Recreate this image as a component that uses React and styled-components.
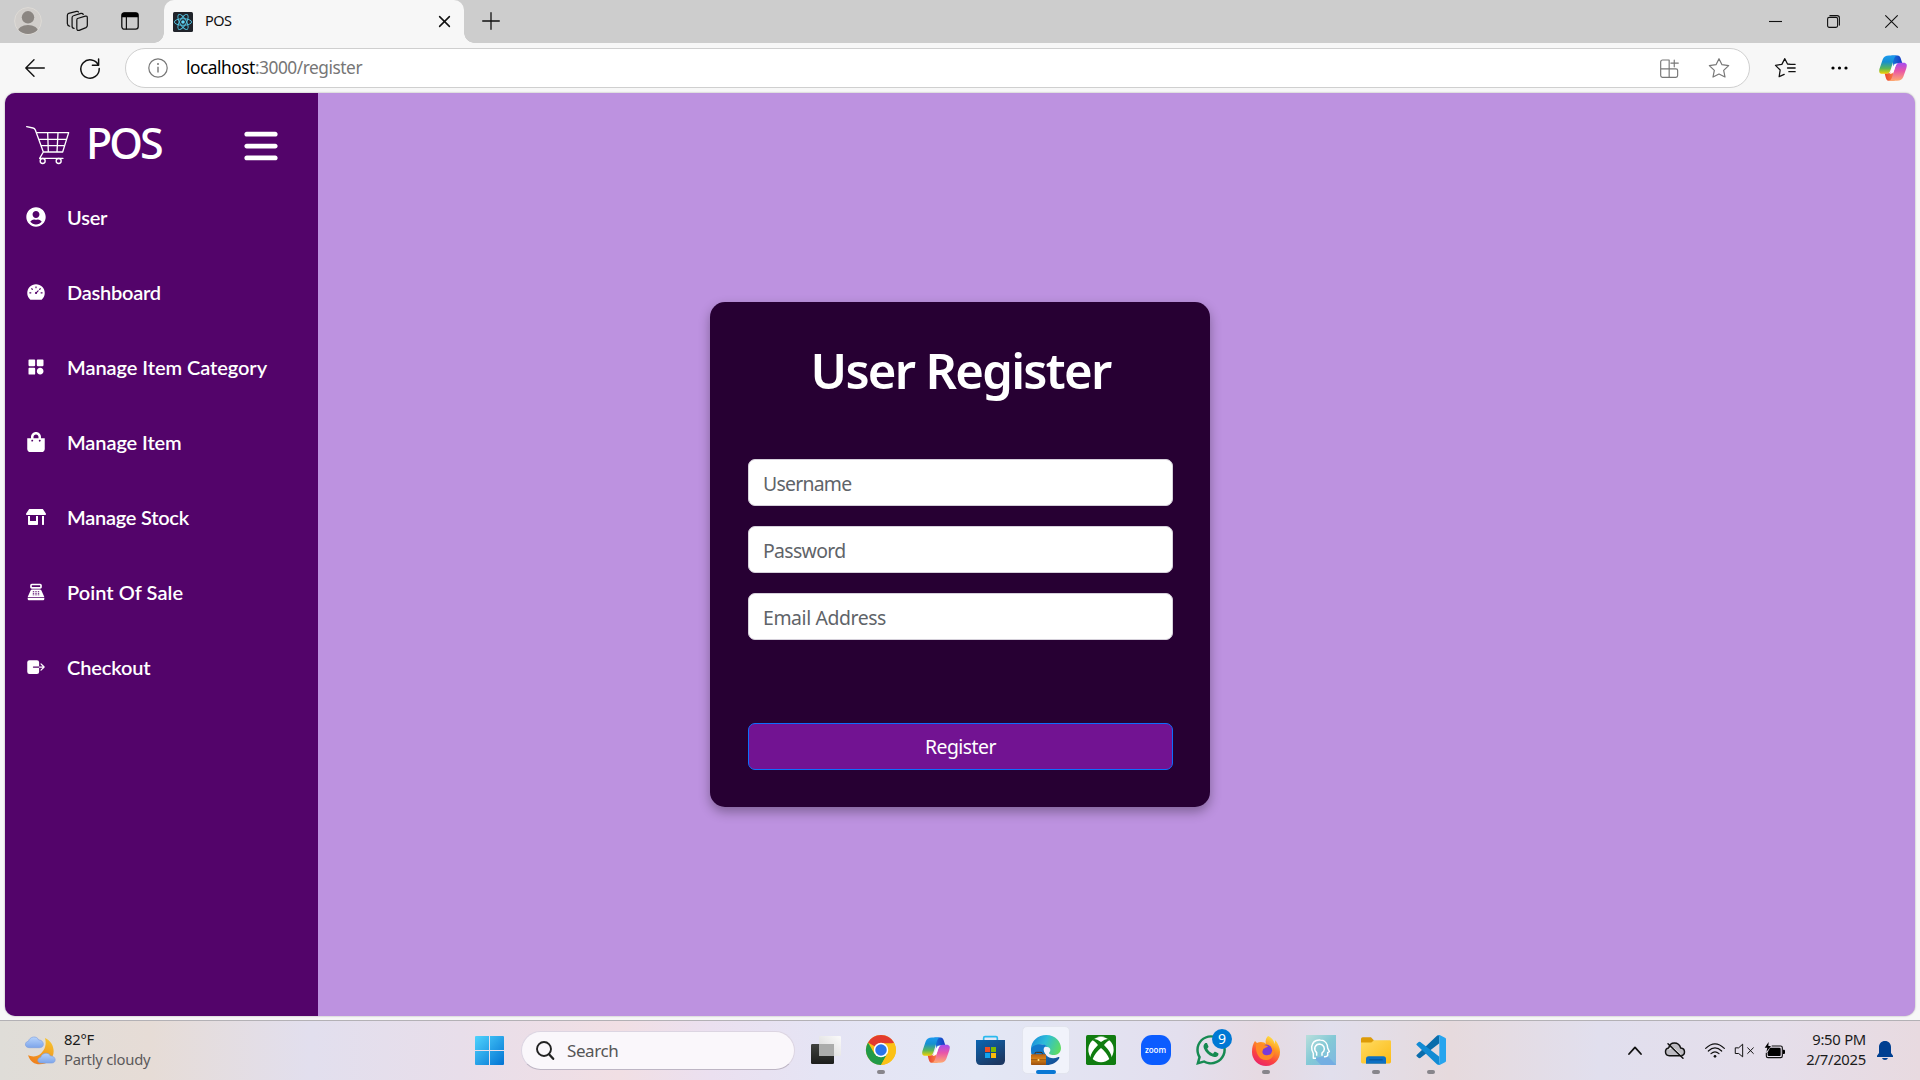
import React from "react";
import styled, { createGlobalStyle } from "styled-components";
import { FaUserCircle, FaShoppingBag, FaStoreAlt } from "react-icons/fa";
import { FaWhatsapp, FaBars } from "react-icons/fa6";
import { AiFillDashboard } from "react-icons/ai";
import { BiSolidCategory } from "react-icons/bi";
import { MdPointOfSale } from "react-icons/md";
import { IoExit } from "react-icons/io5";

const GlobalStyle = createGlobalStyle`
  * { box-sizing: border-box; }
  body { margin: 0; overflow: hidden; font-family: "Noto Sans", sans-serif; }
  svg { display: block; flex: none; overflow: visible; }
`;

const Screen = styled.div`
  width: 1920px;
  height: 1080px;
  display: flex;
  flex-direction: column;
  background: #f7f7f7;
`;

/* ---------- browser chrome ---------- */
const TabStrip = styled.header`
  height: 43px;
  display: flex;
  align-items: center;
  background: #cdcdcd;
`;
const StripTools = styled.div`
  width: 164px;
  height: 42px;
  padding: 0 0 1px 14px;
  display: flex;
  align-items: center;
`;
const Tab = styled.div`
  position: relative;
  width: 300px;
  height: 43px;
  padding: 0 14px 0 9px;
  display: flex;
  align-items: center;
  background: #f7f7f7;
  border-radius: 10px 10px 0 0;
  &::before, &::after {
    content: "";
    position: absolute;
    bottom: 0;
    width: 10px;
    height: 10px;
  }
  &::before {
    left: -10px;
    background: radial-gradient(circle at 0 0, transparent 9.5px, #f7f7f7 10px);
  }
  &::after {
    right: -10px;
    background: radial-gradient(circle at 100% 0, transparent 9.5px, #f7f7f7 10px);
  }
`;
const TabTitle = styled.span`
  flex: 1;
  margin: -3px 0 0 12px;
  font-size: 14.5px;
  letter-spacing: -0.5px;
  color: #111;
`;
const NewTab = styled.div`
  margin: 0 0 1px 18px;
`;
const WindowControls = styled.div`
  margin-left: auto;
  padding-right: 22px;
  display: flex;
  align-items: center;
  gap: 44px;
`;
const Toolbar = styled.div`
  height: 50px;
  padding: 0 13px 0 25px;
  display: flex;
  align-items: center;
`;
const Gap = styled.span`
  flex: none;
  width: ${(p) => p.$w}px;
`;
const AddressBar = styled.div`
  width: 1625px;
  height: 40px;
  margin-left: 25px;
  padding: 0 20px 0 22px;
  display: flex;
  align-items: center;
  background: #fff;
  border: 1px solid #cfcfcf;
  border-radius: 20px;
`;
const Url = styled.span`
  flex: 1;
  margin: -2px 0 0 18px;
  font-size: 17.3px;
  letter-spacing: -0.46px;
  color: #767676;
`;
const Host = styled.span`
  color: #000;
`;

/* ---------- application ---------- */
const Viewport = styled.div`
  height: 928px;
  padding: 0 5px 4px;
  border-bottom: 1px solid #b3b1b5;
`;
const AppFrame = styled.div`
  height: 923px;
  display: flex;
  overflow: hidden;
  border-radius: 10px;
  background: #bd92e0;
  box-shadow: 0 0 2px rgba(0, 0, 0, 0.35);
`;
const Sidebar = styled.nav`
  width: 313px;
  background: #53046a;
  color: #fff;
`;
const SidebarHeader = styled.div`
  height: 86px;
  padding: 18px 40px 0 21px;
  display: flex;
  align-items: center;
`;
const Brand = styled.span`
  flex: 1;
  margin: -5px 0 0 16.5px;
  font-size: 43px;
  font-weight: 500;
  letter-spacing: -3px;
  line-height: 1;
`;
const Burger = styled(FaBars)`
  margin: 1px -2px 0 0;
`;
const MenuItem = styled.a`
  height: 75px;
  padding-left: 21px;
  display: flex;
  align-items: center;
  gap: 21px;
  font-family: Lato, sans-serif;
  font-size: 20px;
  font-weight: 600;
  letter-spacing: ${(p) => p.$track || 0}px;
`;
const IconSlot = styled.span`
  width: 20px;
  display: flex;
  justify-content: center;
`;
const Main = styled.main`
  flex: 1;
  padding-right: 313px;
  display: flex;
  align-items: center;
  justify-content: center;
`;
const Card = styled.form`
  width: 500px;
  height: 505px;
  padding: 38px 37px 37px 38px;
  display: flex;
  flex-direction: column;
  background: #270033;
  border-radius: 15px;
  box-shadow: 0 5px 12px rgba(0, 0, 0, 0.32);
`;
const Title = styled.h1`
  margin: 0 0 59px;
  font-size: 49px;
  font-weight: 600;
  letter-spacing: -1.7px;
  line-height: 60px;
  text-align: center;
  color: #fff;
`;
const Fields = styled.div`
  display: grid;
  gap: 20px;
`;
const Field = styled.input`
  height: 47px;
  padding: 2px 14px 0;
  border: 1px solid #d5d0da;
  border-radius: 7px;
  background: #fff;
  font: 19.4px "Noto Sans", sans-serif;
  letter-spacing: ${(p) => p.$track}px;
  outline: none;
  &::placeholder { color: #5f6469; opacity: 1; }
`;
const Submit = styled.button`
  height: 47px;
  margin-top: auto;
  border: 1px solid #0d6efd;
  border-radius: 7px;
  background: #721392;
  color: #fff;
  font: 19.4px "Noto Sans", sans-serif;
  letter-spacing: -0.5px;
`;

/* ---------- taskbar ---------- */
const Taskbar = styled.footer`
  height: 59px;
  display: flex;
  align-items: center;
  background: linear-gradient(90deg, #dfddd8 0, #e6dcd6 150px, #e2dfee 310px, #e8deea 460px, #f1dfe4 620px, #ebe0f0 710px, #e5e4f4 820px, #e3e7f5 980px, #e3dfee 1180px, #e6dae2 1260px, #e1dfed 1330px, #e6dadd 1450px, #e1dfee 1600px, #e5deea 1780px, #e8dae0 1920px);
`;
const Weather = styled.div`
  width: 462px;
  padding-left: 25px;
  display: flex;
  align-items: center;
  gap: 8px;
`;
const Stack = styled.div`
  display: flex;
  flex-direction: column;
  align-items: ${(p) => p.$align || "flex-start"};
  margin-top: -4px;
  font-size: 14.8px;
  letter-spacing: -0.25px;
  line-height: 20px;
  color: #1b1b1b;
`;
const Muted = styled.span`
  color: #5c5a5b;
`;
const TaskItem = styled.div`
  position: relative;
  flex: none;
  width: 55px;
  height: 59px;
  padding-bottom: 1px;
  display: flex;
  align-items: center;
  justify-content: center;
`;
const ActiveTile = styled.div`
  width: 48px;
  height: 48px;
  display: flex;
  align-items: center;
  justify-content: center;
  background: #f1f3fb;
  border: 1px solid #e2e4ee;
  border-radius: 5px;
`;
const Indicator = styled.span`
  position: absolute;
  bottom: 6px;
  left: 50%;
  width: ${(p) => (p.$active ? 20 : 8)}px;
  height: 4px;
  transform: translateX(-50%);
  border-radius: 2px;
  background: ${(p) => (p.$active ? "#0a78d4" : "#87858b")};
`;
const Badge = styled.span`
  position: absolute;
  top: 8px;
  left: 29px;
  width: 20px;
  height: 20px;
  border-radius: 50%;
  background: #0078d4;
  color: #fff;
  font-size: 14px;
  line-height: 20px;
  text-align: center;
`;
const SearchBox = styled.div`
  flex: none;
  width: 274px;
  height: 39px;
  margin: 0 3px 1px 4px;
  padding-left: 14px;
  display: flex;
  align-items: center;
  gap: 13px;
  background: #faf7fb;
  border: 1px solid #dcd5e2;
  border-bottom-color: #bdb5c4;
  border-radius: 20px;
  font-size: 17px;
  letter-spacing: -0.4px;
  color: #555;
`;
const Tray = styled.div`
  margin-left: auto;
  padding-right: 27px;
  display: flex;
  align-items: center;
`;
const WhatsappMark = styled(FaWhatsapp)`
  color: #168a52;
`;

/* ---------- icons ---------- */
const line = { fill: "none", stroke: "#111", strokeLinecap: "round", strokeLinejoin: "round" };

const Avatar = () => (
  <svg width="28" height="28" viewBox="0 0 28 28">
    <clipPath id="av"><circle cx="14" cy="14" r="13" /></clipPath>
    <circle cx="14" cy="14" r="13.4" fill="#d1cecb" stroke="#dedbd6" />
    <circle cx="14" cy="10.3" r="6.2" fill="#8b8682" />
    <ellipse cx="14" cy="25" rx="10.5" ry="7" fill="#8b8682" clipPath="url(#av)" />
  </svg>
);
const Workspaces = () => (
  <svg width="21" height="20" viewBox="202 35 62 59" {...line} strokeWidth="3.6">
    <path d="M233 57l23-7q6-1 6 5v23q0 4-4 6l-20 8q-7 2-7-5V62q0-4 2-5z" />
    <path d="M223 86q-6 0-6-6V55q0-5 4-6l22-7q5-1 7 3M210 80q-7-2-7-8V48q0-5 4-6l23-6q4-1 6 2" />
  </svg>
);
const TabActions = () => (
  <svg width="18" height="18" viewBox="0 0 18 18">
    <rect x="0.8" y="0.8" width="16.4" height="16.4" rx="2.6" {...line} strokeWidth="1.3" />
    <path d="M.8 5.2V3Q.8.6 3.4.6h11.2q2.6 0 2.6 2.4v2.2z" fill="#000" />
    <path d="M5.4 5v12" {...line} strokeWidth="1.2" />
  </svg>
);
const ReactFavicon = () => (
  <svg width="20" height="20" viewBox="0 0 20 20">
    <rect width="20" height="20" rx="1.5" fill="#20232a" />
    <g fill="none" stroke="#53c1de" strokeWidth="0.95">
      <ellipse cx="10" cy="10" rx="8.6" ry="3.3" />
      <ellipse cx="10" cy="10" rx="8.6" ry="3.3" transform="rotate(60 10 10)" />
      <ellipse cx="10" cy="10" rx="8.6" ry="3.3" transform="rotate(120 10 10)" />
    </g>
    <circle cx="10" cy="10" r="1.8" fill="#61dafb" />
  </svg>
);
const Cross = ({ size, weight }) => (
  <svg width={size} height={size} viewBox={`0 0 ${size} ${size}`} {...line} strokeWidth={weight}>
    <path d={`M.6.6L${size - 0.6} ${size - 0.6}M${size - 0.6}.6L.6 ${size - 0.6}`} />
  </svg>
);
const Plus = () => (
  <svg width="18" height="18" viewBox="0 0 18 18" {...line} strokeWidth="1.3"><path d="M9 .7v16.6M.7 9h16.6" /></svg>
);
const Minimize = () => (
  <svg width="14" height="14" viewBox="0 0 14 14" {...line} strokeWidth="1.1" strokeLinecap="butt"><path d="M0 6.5h13" /></svg>
);
const Restore = () => (
  <svg width="14" height="13" viewBox="0 0 14 13" {...line} strokeWidth="1.1">
    <rect x=".6" y="2.4" width="10" height="10" rx="1.6" />
    <path d="M2.9.6h7.2q2.3 0 2.3 2.3v7.2" />
  </svg>
);
const Back = () => (
  <svg width="20" height="18" viewBox="0 0 20 18" {...line} strokeWidth="1.4"><path d="M19.3 9H1M9 .8L.8 9 9 17.2" /></svg>
);
const Reload = () => (
  <svg width="20" height="21" viewBox="0 0 20 21" {...line} strokeWidth="1.5">
    <path d="M18.4 7.2A9.2 9.2 0 1 0 19.2 10.6M18.6.9v6.3h-6.2" />
  </svg>
);
const Info = () => (
  <svg width="20" height="20" viewBox="0 0 20 20">
    <circle cx="10" cy="10" r="9.2" fill="none" stroke="#777" strokeWidth="1.2" />
    <path d="M10 8.8v5.6" stroke="#777" strokeWidth="1.4" />
    <circle cx="10" cy="5.9" r="1" fill="#777" />
  </svg>
);
const AppInstall = () => (
  <svg width="19" height="19" viewBox="180 176 56 56" {...line} stroke="#777" strokeWidth="3.4">
    <path d="M207 179h-19q-6 0-6 6v40q0 5 5 5h40q5 0 5-5v-15q0-5-5-5h-45M207 179v51M222 179v20M212 188h22" />
  </svg>
);
const Star = () => (
  <svg width="20" height="20" viewBox="327 176 60 60" {...line} stroke="#777" strokeWidth="3.6">
    <path d="M357 178l9 18 20 3-15 14 4 20-18-9-18 9 4-20-15-14 20-3z" />
  </svg>
);
const Favorites = () => (
  <svg width="21" height="20" viewBox="525 176 62 60" {...line} strokeWidth="3.8">
    <path d="M572 195l-10-1-8-16-9 17-19 3 14 14-3 20 15-7M566 195h19M562 206h23M566 217h19" />
  </svg>
);
const Dots = () => (
  <svg width="17" height="4" viewBox="0 0 17 4"><circle cx="2" cy="2" r="1.6" /><circle cx="8.5" cy="2" r="1.6" /><circle cx="15" cy="2" r="1.6" /></svg>
);
const Copilot = () => (
  <svg width="28" height="26" viewBox="837 165 84 77">
    <defs>
      <linearGradient id="cpA" x1="0" y1="0" x2="0" y2="1"><stop offset="0" stopColor="#1a9af0" /><stop offset=".35" stopColor="#168fd0" /><stop offset=".7" stopColor="#59b65a" /><stop offset="1" stopColor="#f5d000" /></linearGradient>
      <linearGradient id="cpB" x1="0" y1="0" x2="0" y2="1"><stop offset="0" stopColor="#a44df0" /><stop offset=".45" stopColor="#e955a8" /><stop offset="1" stopColor="#ffab70" /></linearGradient>
      <linearGradient id="cpC"><stop offset="0" stopColor="#1579d8" /><stop offset="1" stopColor="#1737c4" /></linearGradient>
      <linearGradient id="cpD"><stop offset="0" stopColor="#e8442f" /><stop offset="1" stopColor="#fb8345" /></linearGradient>
    </defs>
    <path d="M874 166h19c9 0 10 12 14 23h-13c-7 0-10 4-13 10z" fill="url(#cpC)" />
    <path d="M884 242h-17c-9 0-10-12-13-23h11c7 0 11-4 13-10z" fill="url(#cpD)" />
    <path d="M867 166h24c-7 2-9 10-12 20l-7 22c-3 9-6 13-14 13h-10c-11 0-12-8-9-17l9-26c3-8 9-12 19-12z" fill="url(#cpA)" />
    <path d="M891 242h-24c7-2 9-10 12-20l7-22c3-9 6-12 14-12h10c11 0 12 7 9 16l-9 26c-3 8-9 12-19 12z" fill="url(#cpB)" />
    <path d="M884 191l7 0q-4 4-6 11l-4 12q-3 7-8 7h-5q4-3 6-10z" fill="#fff" />
  </svg>
);
const Cart = () => (
  <svg width="43.5" height="38.5" viewBox="77 108 130.5 115.5" {...line} stroke="#fff" strokeWidth="4">
    <path d="M79 110l19 4q5 1 7 6l24 66-11 19h70M109 128h96l-18 58h-58M116 148h83M122 167h70M142 128l2 58M173 128l-3 58" />
    <circle cx="127" cy="213" r="7.5" /><circle cx="175" cy="213" r="7.5" />
  </svg>
);

const WeatherIcon = () => (
  <svg width="31" height="29" viewBox="74 100 93 87">
    <defs>
      <linearGradient id="moon" x1=".8" y1="0" x2=".3" y2="1"><stop offset="0" stopColor="#f6c52e" /><stop offset="1" stopColor="#ef7f1c" /></linearGradient>
      <linearGradient id="cloud" x1="0" y1="0" x2="0" y2="1"><stop offset="0" stopColor="#b7d3fb" /><stop offset="1" stopColor="#7da5ea" /></linearGradient>
    </defs>
    <path d="M134 106c16 8 26 22 26 39 0 25-19 40-42 40-15 0-28-7-35-27 12 5 27 5 38-5 14-12 18-29 13-47z" fill="url(#moon)" />
    <path d="M86 135c-14 0-14-18-2-19 4-15 26-18 31-4 16-1 20 23 3 23z" fill="url(#cloud)" stroke="#7ea0df" strokeWidth="2" />
    <path d="M122 181c-13 0-12-15-1-17 4-14 24-17 29-4 17-1 20 21 4 21z" fill="url(#cloud)" stroke="#7ea0df" strokeWidth="2" />
  </svg>
);
const WindowsLogo = () => (
  <svg width="29" height="29" viewBox="0 0 29 29">
    <defs><linearGradient id="win" x1="0" y1="0" x2="1" y2="1"><stop offset="0" stopColor="#4fd3fd" /><stop offset="1" stopColor="#0273d3" /></linearGradient></defs>
    <path d="M1 0h13v14H0V1Q0 0 1 0zM15 0h13q1 0 1 1v13H15zM0 15h14v14H1q-1 0-1-1zM15 15h14v13q0 1-1 1H15z" fill="url(#win)" />
  </svg>
);
const SearchIcon = () => (
  <svg width="18" height="19" viewBox="0 0 18 19" {...line} stroke="#222" strokeWidth="1.9"><circle cx="8" cy="8" r="7" /><path d="M13 13.2l4.2 4.6" strokeWidth="2.3" /></svg>
);
const TaskView = () => (
  <svg width="30" height="28" viewBox="0 0 30 28">
    <defs>
      <linearGradient id="tv" x1="0" y1="0" x2="0" y2="1"><stop offset="0" stopColor="#40423f" /><stop offset="1" stopColor="#1c1d1b" /></linearGradient>
      <linearGradient id="tw" x1="1" y1="0" x2="0" y2="1"><stop offset="0" stopColor="#fbfbfb" /><stop offset="1" stopColor="#d6d6d6" /></linearGradient>
    </defs>
    <rect y="8" width="23" height="20" rx="1.3" fill="url(#tv)" />
    <rect x="8" y="0" width="22" height="20" rx="1.3" fill="url(#tw)" />
    <path d="M8 8h15v12H9q-1 0-1-1z" fill="#abacab" />
  </svg>
);
const Chrome = () => (
  <svg width="30" height="30" viewBox="0 0 48 48">
    <circle cx="24" cy="24" r="24" fill="#fbc116" />
    <path d="M24 24L3.2 12A24 24 0 0 1 44.8 12z" fill="#e33b2e" />
    <path d="M3.2 12A24 24 0 0 0 24 48l10.4-18L24 24 13.6 30z" fill="#219a48" />
    <path d="M24 13h21.2A24 24 0 0 1 24 48l10-18z" fill="#fbc116" />
    <circle cx="24" cy="24" r="11.6" fill="#fff" /><circle cx="24" cy="24" r="9.2" fill="#2a75ea" />
  </svg>
);
const Store = () => (
  <svg width="29" height="29" viewBox="48 78 87 87">
    <defs><linearGradient id="st" x1="0" y1="0" x2=".6" y2="1"><stop offset="0" stopColor="#0c66b2" /><stop offset="1" stopColor="#1c3863" /></linearGradient></defs>
    <path d="M71 94V84q0-4 4-4h33q4 0 4 4v10" fill="none" stroke="#2bb9ee" strokeWidth="5" />
    <path d="M48 90h87v61q0 14-14 14H62q-14 0-14-14z" fill="url(#st)" />
    <path fill="#f04f23" d="M75 111h15v15H75z" /><path fill="#7fba00" d="M93 111h15v15H93z" /><path fill="#12a4ee" d="M75 129h15v15H75z" /><path fill="#fdb90b" d="M93 129h15v15H93z" />
  </svg>
);
const Edge = () => (
  <svg width="30" height="30" viewBox="213 75 90 90">
    <defs>
      <linearGradient id="eg" x1="0" y1=".3" x2="1" y2=".6"><stop offset="0" stopColor="#1b8fdc" /><stop offset=".45" stopColor="#2dbdd8" /><stop offset="1" stopColor="#5edc62" /></linearGradient>
      <linearGradient id="ed" x1="0" y1="0" x2="1" y2="1"><stop offset="0" stopColor="#1390dc" /><stop offset="1" stopColor="#15478c" /></linearGradient>
      <linearGradient id="bc" x1="0" y1="0" x2="0" y2="1"><stop offset="0" stopColor="#b96012" /><stop offset=".45" stopColor="#d9841a" /><stop offset="1" stopColor="#9b4f0d" /></linearGradient>
    </defs>
    <path d="M213 118c2 27 20 46 46 47 18 0 31-8 38-19 3-4 0-6-4-4-11 5-26 4-35-7-5-6-8-13-7-20-13-19-36-11-38 3z" fill="url(#ed)" />
    <path d="M213 118c0-26 21-43 46-43 28 0 44 21 44 39 0 17-14 22-26 21-8-1-12-4-8-9 5-7 1-16-12-16 2-2-7-8-18-6-13 1-22 7-26 14z" fill="url(#eg)" />
    <path d="M213 118c3-17 40-20 48-9-10 1-15 11-12 23h-35z" fill="#1379cc" />
    <path d="M225 134v-3q0-4 4-4h14q4 0 4 4v3" fill="none" stroke="#4b2a0b" strokeWidth="3" />
    <rect x="213" y="133" width="45" height="32" rx="2" fill="url(#bc)" /><path d="M213 149h45" stroke="#80430d" strokeWidth="2" /><rect x="233" y="147" width="5" height="6" fill="#ffd879" />
  </svg>
);
const Xbox = () => (
  <svg width="30" height="30" viewBox="378 75 90 90">
    <rect x="378" y="75" width="90" height="90" rx="5" fill="#107c10" />
    <circle cx="423" cy="119" r="38" fill="#fff" />
    <path d="M399 88q9-3 24 8 15-11 24-8l4 2q-8 2-19 15 22 22 23 38l-6 6q-9-22-26-35-17 13-26 35l-6-6q1-16 23-38-11-13-19-15z" fill="#107c10" />
    <path d="M406 83q8-3 17 3 9-6 17-3-17-7-34 0z" fill="#fff" />
  </svg>
);
const ZoomTile = styled.div`
  width: 30px;
  height: 30px;
  display: flex;
  align-items: center;
  justify-content: center;
  border-radius: 11px;
  background: #0b5cff;
  color: #fff;
  font: 600 8px/1 "Open Sans", sans-serif;
  padding-bottom: 1px;
`;
const Firefox = () => (
  <svg width="30" height="30" viewBox="0 0 30 30">
    <defs>
      <linearGradient id="fx" x1=".8" y1="0" x2=".3" y2="1"><stop offset="0" stopColor="#fff04c" /><stop offset=".35" stopColor="#ff9a22" /><stop offset=".7" stopColor="#fb4540" /><stop offset="1" stopColor="#e9236b" /></linearGradient>
    </defs>
    <path d="M17 1c5 2 6 6 7 8 0-2 0-3 0-4 3 3 5 8 5 12a14 14 0 0 1-28 0C1 12 2 9 4 6l2 2c3-2 8-1 9 1-1-3 0-6 2-8z" fill="url(#fx)" />
    <circle cx="15.3" cy="15.3" r="5.8" fill="#7a3bd8" />
    <path d="M5 9c4-2 7 0 8 1l4 1c-1 2-5 2-5 4-2 3 1 6 5 5 4 0 6-4 5-8 3 6 0 12-6 13-7 1-12-6-11-16z" fill="#ff8a25" />
  </svg>
);
const HeadApp = () => (
  <svg width="30" height="30" viewBox="1038 75 90 90">
    <defs><linearGradient id="hd" x1="0" y1="0" x2="1" y2="1"><stop offset="0" stopColor="#b9dfdc" /><stop offset=".5" stopColor="#83c9d6" /><stop offset="1" stopColor="#7fb7e2" /></linearGradient></defs>
    <path d="M1038 75h90v90h-90z" fill="url(#hd)" /><path d="M1062 144l40-6 26 26v1h-45z" fill="#6ea7e4" opacity=".7" />
    <g fill="none" stroke="#fff" strokeWidth="4.5" strokeLinejoin="round"><path d="M1068 145h-8v-15q-6-9-5-20c3-17 15-21 26-20 15 1 22 12 22 24l5 11-5 3v8q-2 5-11 4" /><path d="M1070 137v-9q-8-7-5-17 4-9 14-9c12 1 17 13 12 22l-5 5v8" /></g>
  </svg>
);
const Explorer = () => (
  <svg width="30" height="27" viewBox="1203 81 90 80">
    <defs><linearGradient id="ex" x1="0" y1="0" x2="1" y2="1"><stop offset="0" stopColor="#ffdb62" /><stop offset="1" stopColor="#fcbb16" /></linearGradient></defs>
    <path d="M1203 86q0-5 5-5h25l9 10v20h-39z" fill="#dd9b08" /><path d="M1203 97h31l8-7h47q4 0 4 4v61q0 5-5 5h-80q-5 0-5-5z" fill="url(#ex)" />
    <path d="M1218 161v-15q0-8 8-8h44q8 0 8 8v15z" fill="#0d70c4" /><path d="M1228 149h40" stroke="#084f91" strokeWidth="3" />
  </svg>
);
const VsCode = () => (
  <svg width="30" height="30" viewBox="1368 75 90 90">
    <path d="M1370 139l6 5q2 1 5 0l57-44V75q-5 0-8 3l-60 57q-2 2 0 4z" fill="#0a6cab" />
    <path d="M1370 101l6-5q2-1 5 0l57 44v25q-5 0-8-3l-60-57q-2-2 0-4z" fill="#128bd4" />
    <path d="M1433 77q2-3 6-2l16 8q3 1 3 5v64q0 4-3 5l-16 8q-4 1-7-2 6 1 6-6V83q0-7-5-6z" fill="#27a5ee" />
  </svg>
);
const Chevron = () => (
  <svg width="14" height="9" viewBox="0 0 14 9" {...line} strokeWidth="1.8"><path d="M1 8l6-6.6L13 8" /></svg>
);
const CloudOff = () => (
  <svg width="20" height="17" viewBox="192 125 60 51" {...line} strokeWidth="4.4">
    <path d="M205 166h33c17 0 16-22 1-23-6-20-32-20-36 0-13 2-13 23 2 23z" fill="#bdbbc2" /><path d="M204 146q9-8 18 0l18 17" stroke="#f5f5f5" strokeWidth="3" /><path d="M201 130l45 44" />
  </svg>
);
const Wifi = () => (
  <svg width="20" height="15" viewBox="312 126 60 45" {...line} strokeWidth="3.6">
    <path d="M314 142q28-27 56 0M322 150q20-19 40 0M330 158q12-11 24 0" /><circle cx="342" cy="166" r="4" fill="#111" stroke="none" />
  </svg>
);
const VolumeOff = () => (
  <svg width="19" height="15" viewBox="402 128 57 44" {...line} strokeWidth="3">
    <path d="M404 142h9l12-11v38l-12-10h-9zM440 142l17 17M457 142l-17 17" />
  </svg>
);
const Battery = () => (
  <svg width="20" height="17" viewBox="492 120 60 51">
    <path d="M512 132h27q5 0 5 5v25q0 5-5 5h-38q-5 0-5-5v-10" fill="none" stroke="#111" strokeWidth="3.4" /><path d="M507 137h28q4 0 4 4v18q0 3-3 3h-33q-3 0-3-3v-8z" /><path d="M546 143h3q3 0 3 3v7q0 3-3 3h-3z" /><path d="M503 120l-12 17h8l-3 13 14-18h-8z" />
  </svg>
);
const Bell = () => (
  <svg width="16" height="19" viewBox="831 123 48 57" fill="#003f91">
    <path d="M855 123c11 0 18 8 18 18v18l6 8v4h-48v-4l6-8v-18c0-10 7-18 18-18z" /><path d="M846 174h18q-2 6-9 6t-9-6z" />
  </svg>
);

const MENU = [
  { label: "User", Icon: FaUserCircle, track: -0.2 },
  { label: "Dashboard", Icon: AiFillDashboard, track: -0.25 },
  { label: "Manage Item Category", Icon: BiSolidCategory, track: -0.06 },
  { label: "Manage Item", Icon: FaShoppingBag, track: -0.1 },
  { label: "Manage Stock", Icon: FaStoreAlt, track: -0.25 },
  { label: "Point Of Sale", Icon: MdPointOfSale, track: 0.05 },
  { label: "Checkout", Icon: IoExit, track: -0.15 },
];
const FIELDS = [
  { label: "Username", track: -0.75 },
  { label: "Password", track: -0.65 },
  { label: "Email Address", track: -0.4 },
];
const APPS = [
  { Icon: TaskView },
  { Icon: Chrome, running: true },
  { Icon: Copilot },
  { Icon: Store },
  { Icon: Edge, active: true },
  { Icon: Xbox },
  { Icon: () => <ZoomTile>zoom</ZoomTile> },
  { Icon: () => <WhatsappMark size={34} />, badge: "9" },
  { Icon: Firefox, running: true },
  { Icon: HeadApp },
  { Icon: Explorer, running: true },
  { Icon: VsCode, running: true },
];

export default function App() {
  return (
    <Screen>
      <GlobalStyle />
      <TabStrip>
        <StripTools>
          <Avatar /><Gap $w={25} /><Workspaces /><Gap $w={33} /><TabActions />
        </StripTools>
        <Tab>
          <ReactFavicon />
          <TabTitle>POS</TabTitle>
          <Cross size={11} weight={1.5} />
        </Tab>
        <NewTab><Plus /></NewTab>
        <WindowControls><Minimize /><Restore /><Cross size={13} weight={1.1} /></WindowControls>
      </TabStrip>
      <Toolbar>
        <Back /><Gap $w={35} /><Reload />
        <AddressBar>
          <Info />
          <Url><Host>localhost</Host>:3000/register</Url>
          <AppInstall /><Gap $w={30} /><Star />
        </AddressBar>
        <Gap $w={25} /><Favorites /><Gap $w={35} /><Dots /><Gap $w={31} /><Copilot />
      </Toolbar>
      <Viewport>
        <AppFrame>
          <Sidebar>
            <SidebarHeader><Cart /><Brand>POS</Brand><Burger size={38} /></SidebarHeader>
            {MENU.map(({ label, Icon, track }) => (
              <MenuItem key={label} $track={track}><IconSlot><Icon size={20} /></IconSlot>{label}</MenuItem>
            ))}
          </Sidebar>
          <Main>
            <Card>
              <Title>User Register</Title>
              <Fields>{FIELDS.map((f) => <Field key={f.label} placeholder={f.label} $track={f.track} />)}</Fields>
              <Submit type="button">Register</Submit>
            </Card>
          </Main>
        </AppFrame>
      </Viewport>
      <Taskbar>
        <Weather>
          <WeatherIcon />
          <Stack><span>82°F</span><Muted>Partly cloudy</Muted></Stack>
        </Weather>
        <TaskItem><WindowsLogo /></TaskItem>
        <SearchBox><SearchIcon />Search</SearchBox>
        {APPS.map(({ Icon, active, running, badge }, i) => (
          <TaskItem key={i}>
            {active ? <ActiveTile><Icon /></ActiveTile> : <Icon />}
            {(active || running) && <Indicator $active={active} />}
            {badge && <Badge>{badge}</Badge>}
          </TaskItem>
        ))}
        <Tray>
          <Chevron /><Gap $w={23} /><CloudOff /><Gap $w={20} /><Wifi /><Gap $w={10} /><VolumeOff /><Gap $w={11} /><Battery />
          <Gap $w={21} />
          <Stack $align="flex-end"><span>9:50 PM</span><span>2/7/2025</span></Stack>
          <Gap $w={11} /><Bell />
        </Tray>
      </Taskbar>
    </Screen>
  );
}
